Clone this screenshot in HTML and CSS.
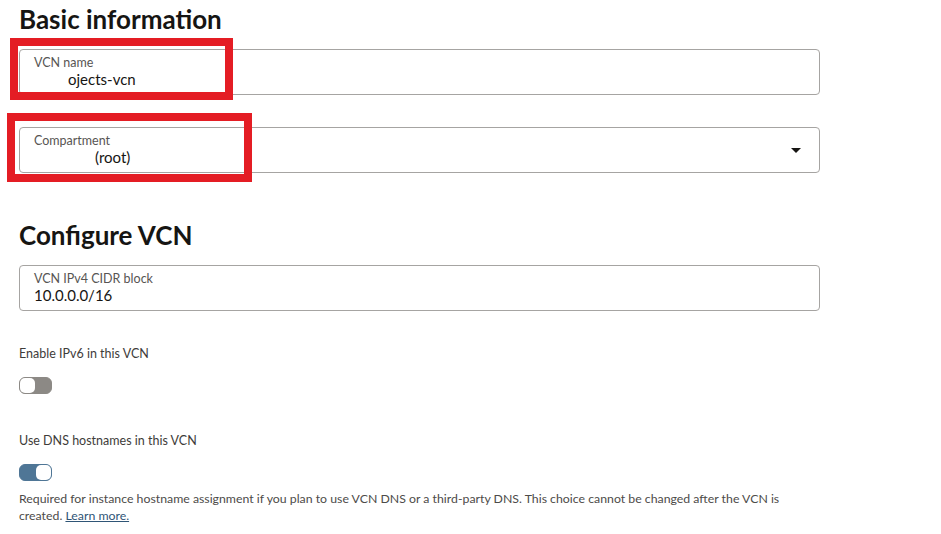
FILE: index.html
```html
<!DOCTYPE html>
<html lang="en">
<head>
    <meta charset="UTF-8">
    <meta name="viewport" content="width=device-width, initial-scale=1.0">
    <title>Create VCN</title>
    <link rel="stylesheet" href="styles.css">
</head>
<body>
    <main class="page">
        <h1 class="title">Basic information</h1>
        <div class="field">
            <span class="label">VCN name</span>
            <span class="value"><span class="blank name-blank"></span>ojects-vcn</span>
        </div>
        <div class="field select m-top">
            <span class="label">Compartment</span>
            <span class="value"><span class="blank root-blank"></span>(root)</span>
            <span class="caret"></span>
        </div>

        <h2 class="title second">Configure VCN</h2>
        <div class="field">
            <span class="label">VCN IPv4 CIDR block</span>
            <span class="value">10.0.0.0/16</span>
        </div>

        <p class="switch-label first-switch">Enable IPv6 in this VCN</p>
        <div class="switch"><span class="knob"></span></div>

        <p class="switch-label">Use DNS hostnames in this VCN</p>
        <div class="switch on"><span class="knob"></span></div>
        <p class="help">Required for instance hostname assignment if you plan to use VCN DNS or a third-party DNS. This choice cannot be changed after the VCN is created. <a href="#">Learn more.</a></p>

        <!-- annotation boxes drawn over the form -->
        <div class="mark mark-name"></div>
        <div class="mark mark-comp"></div>
    </main>
</body>
</html>
```

FILE: styles.css
```css
*{
    margin: 0;
    padding: 0;
    box-sizing: border-box;
}
body{
    background: white;
    color: #161513;
    font-family: Lato, "Noto Sans", sans-serif;
}
.page{
    position: relative;
    width: 820px;
    padding-left: 19px;
    padding-top: 4px;
}
.title{
    font-size: 26px;
    font-weight: 700;
    line-height: 30px;
    color: #161513;
}
.second{
    margin-top: 47px;
}
.field{
    display: flex;
    flex-direction: column;
    height: 46px;
    margin-top: 15px;
    padding: 6px 14px 0;
    border: 1px solid #a6a4a2;
    border-radius: 4px;
    position: relative;
}
.m-top{
    margin-top: 32px;
}
.label{
    font-size: 12.5px;
    line-height: 14px;
    color: #575553;
}
.value{
    font-size: 15px;
    line-height: 19px;
    color: #161513;
}
.blank{
    display: inline-block;
}
.name-blank{
    width: 34px;
}
.root-blank{
    width: 61px;
}
.caret{
    position: absolute;
    right: 18px;
    top: 20px;
    border-left: 5px solid transparent;
    border-right: 5px solid transparent;
    border-top: 5px solid #161513;
}
.switch-label{
    font-size: 12.5px;
    line-height: 16px;
    color: #3e3c3a;
}
.first-switch{
    margin-top: 35px;
}
.switch{
    width: 33px;
    height: 17px;
    margin-top: 15px;
    margin-bottom: 39px;
    border-radius: 6px;
    background: #8c8985;
    border: 1px solid #8c8985;
    display: flex;
    align-items: center;
}
.knob{
    width: 15px;
    height: 15px;
    border-radius: 5px;
    background: white;
}
.switch.on{
    background: #4f7696;
    border-color: #4f7696;
    justify-content: flex-end;
    margin-bottom: 0;
}
.help{
    margin-top: 9px;
    font-size: 12.3px;
    line-height: 17px;
    color: #4d4b49;
    width: 790px;
}
.help a{
    color: #2f5576;
}
.mark{
    position: absolute;
    border: 8px solid #e41d24;
}
.mark-name{
    left: 10px;
    top: 38px;
    width: 223px;
    height: 62px;
}
.mark-comp{
    left: 7px;
    top: 113px;
    width: 245px;
    height: 69px;
}
```
